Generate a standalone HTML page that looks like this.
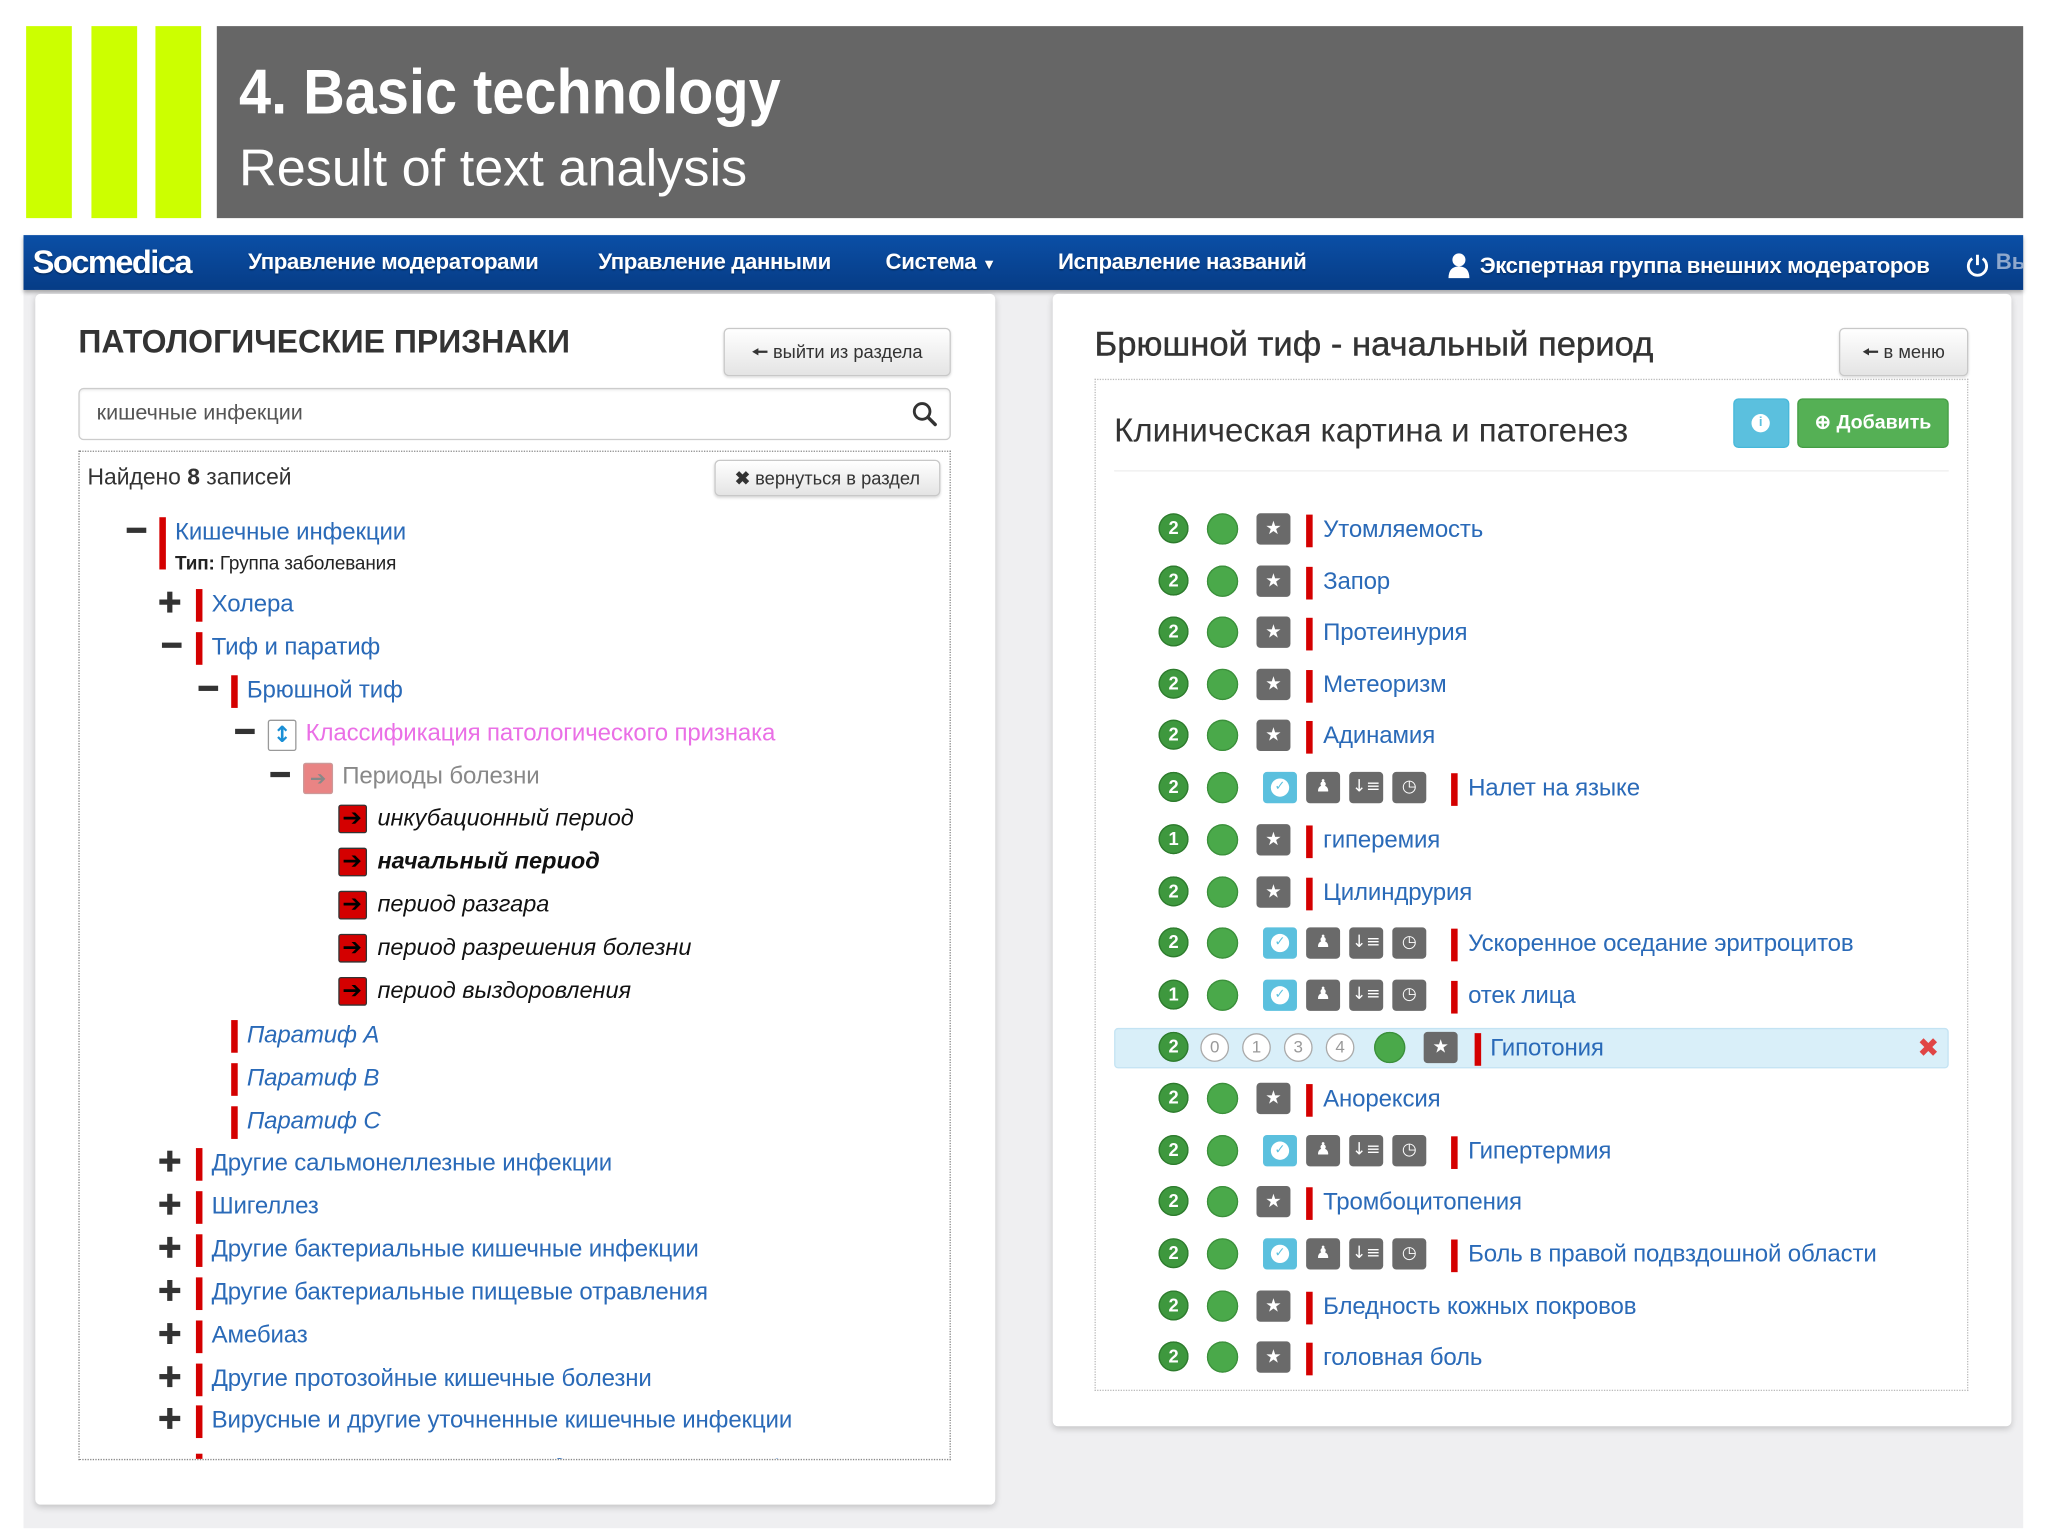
<!DOCTYPE html>
<html><head><meta charset="utf-8">
<style>
html,body{margin:0;padding:0;background:#fff;overflow:hidden;width:2048px;height:1536px}
#s{position:absolute;left:0;top:0;width:1568px;height:1176px;transform:scale(1.30612);transform-origin:0 0;font-family:"Liberation Sans",Arial,sans-serif;color:#333}
.a{position:absolute}
.g{background:#ccff00}
.btn{position:absolute;border:1px solid #c8c8c8;border-radius:4px;background:linear-gradient(#fff,#e4e4e4);box-shadow:0 1px 2px rgba(0,0,0,.15);font-size:14px;color:#333;text-align:center;box-sizing:border-box}
.nav{position:absolute;color:#fff;font-weight:bold;font-size:17px;letter-spacing:-0.3px;top:191px;white-space:nowrap;text-shadow:0 1px 1px rgba(0,0,0,.3)}
.r{position:absolute;left:0;height:0;white-space:nowrap}
.r>*{position:absolute}
.bar{width:5px;height:25px;top:-11px;background:#d40000}
.t{top:-12px;font-size:18.4px;line-height:23px;color:#2a6ab8;letter-spacing:-0.1px}
.mi{width:15px;height:4px;background:#333;top:-3px}
.pl{width:16px;height:16px;top:-9px}
.pl:before{content:"";position:absolute;left:0;top:6px;width:16px;height:4px;background:#333}
.pl:after{content:"";position:absolute;left:6px;top:0;width:4px;height:16px;background:#333}
.pi{width:22px;height:22px;top:-11px;background:#d40000;border:1px solid #333;border-radius:2px;box-sizing:border-box}
.pi:after{content:"\2794";position:absolute;left:2px;top:-1px;font-size:18px;color:#000;font-family:"DejaVu Sans",sans-serif}
.pt{top:-12px;font-size:18px;line-height:23px;font-style:italic;color:#111}
.num{width:23px;height:23px;top:-12px;border-radius:50%;background:#3e983e;box-shadow:inset 0 0 0 1px #2d7a2d;color:#fff;font-size:14px;font-weight:bold;text-align:center;line-height:23px}
.on{width:20px;height:20px;top:-11px;border-radius:50%;border:1px solid #aaa;color:#999;font-size:13px;text-align:center;line-height:20px;background:#fff}
.gc{width:24px;height:24px;top:-12px;border-radius:50%;background:#4aa94a;box-shadow:inset 0 0 0 1px #3b8f3b}
.sb{width:26px;height:24px;top:-12px;border-radius:3px;background:#6a6a6a;color:#fff;font-size:14px;text-align:center;line-height:24px;font-family:"DejaVu Sans",sans-serif}
.bb{width:26px;height:24px;top:-12px;border-radius:3px;background:#5bc0de}
.bb:after{content:"\2713";position:absolute;left:6px;top:5px;width:14px;height:14px;border-radius:50%;background:#fff;color:#5bc0de;font-size:10px;line-height:14px;text-align:center;font-weight:bold;font-family:"DejaVu Sans",sans-serif}
.gb{width:26px;height:24px;top:-12px;border-radius:3px;background:#6a6a6a;color:#fff;font-size:13px;text-align:center;line-height:24px;font-family:"DejaVu Sans",sans-serif}
</style></head><body>
<div id="s">
<div class="a g" style="left:20px;top:20px;width:35px;height:147px"></div>
<div class="a g" style="left:70px;top:20px;width:35px;height:147px"></div>
<div class="a g" style="left:119px;top:20px;width:35px;height:147px"></div>
<div class="a" style="left:166px;top:20px;width:1383px;height:147px;background:#666"></div>
<div class="a" style="left:183px;top:44px;color:#fff;font-size:48px;font-weight:bold;line-height:56px;transform:scaleX(.92);transform-origin:0 0;white-space:nowrap">4. Basic technology</div>
<div class="a" style="left:183px;top:105px;color:#fff;font-size:40px;line-height:48px;white-space:nowrap">Result of text analysis</div>

<div class="a" style="left:18px;top:222px;width:1531px;height:948px;background:#efeff1"></div>
<div class="a" style="left:18px;top:180px;width:1531px;height:42px;background:linear-gradient(#0b4fa6,#063c86);box-shadow:0 2px 3px rgba(0,0,0,.3);overflow:hidden">
 <div class="a" style="left:1510px;top:11px;color:#8fa8cc;font-size:17px;font-weight:bold">Вы</div>
</div>
<div class="nav" style="left:25px;top:187px;font-size:25px;letter-spacing:-1.2px">Socmedica</div>
<div class="nav" style="left:190px">Управление модераторами</div>
<div class="nav" style="left:458px">Управление данными</div>
<div class="nav" style="left:678px">Система <span style="font-size:11px">&#9660;</span></div>
<div class="nav" style="left:810px">Исправление названий</div>
<svg class="a" style="left:1108px;top:193px" width="18" height="20" viewBox="0 0 18 20"><circle cx="9" cy="6" r="5" fill="#fff"/><path d="M1 20 Q1 11 9 11 Q17 11 17 20Z" fill="#fff"/></svg>
<div class="nav" style="left:1133px;top:194px">Экспертная группа внешних модераторов</div>
<svg class="a" style="left:1505px;top:194px" width="18" height="18" viewBox="0 0 18 18"><path d="M5 4 A7 7 0 1 0 13 4" fill="none" stroke="#fff" stroke-width="2.2"/><path d="M9 1 V9" stroke="#fff" stroke-width="2.2"/></svg>

<div class="a" style="left:27px;top:225px;width:735px;height:927px;background:#fff;border-radius:4px;box-shadow:0 2px 5px rgba(0,0,0,.18)"></div>
<div class="a" style="left:60px;top:249px;font-size:24.5px;font-weight:bold;color:#333;white-space:nowrap">ПАТОЛОГИЧЕСКИЕ ПРИЗНАКИ</div>
<div class="btn" style="left:554px;top:251px;width:174px;height:37px;line-height:35px"><b style="font-family:'DejaVu Sans';font-size:14px">&#129044;</b> выйти из раздела</div>
<div class="a" style="left:60px;top:297px;width:668px;height:40px;border:1px solid #ccc;border-radius:4px;box-sizing:border-box;box-shadow:inset 0 1px 2px rgba(0,0,0,.08)"></div>
<div class="a" style="left:74px;top:307px;font-size:16.5px;color:#555">кишечные инфекции</div>
<svg class="a" style="left:698px;top:307px" width="20" height="20" viewBox="0 0 20 20"><circle cx="8" cy="8" r="6" fill="none" stroke="#333" stroke-width="2.2"/><path d="M12.5 12.5 L18 18" stroke="#333" stroke-width="2.6" stroke-linecap="round"/></svg>
<div class="a" style="left:60px;top:345px;width:668px;height:773px;border:1px dotted #888;box-sizing:border-box"></div>
<div class="a" style="left:67px;top:355px;font-size:17.5px;color:#333">Найдено <b>8</b> записей</div>
<div class="btn" style="left:547px;top:352px;width:173px;height:28px;line-height:27px;font-size:14px"><b>&#10006;</b> вернуться в раздел</div>

<div class="a" style="left:61px;top:346px;width:666px;height:771px;overflow:hidden">
<div class="a" style="left:-61px;top:-346px;width:800px;height:1200px">
 <div class="r" style="top:407px"><div class="mi" style="left:97px"></div><div class="bar" style="left:122px;height:40px"></div><div class="t" style="left:134px">Кишечные инфекции</div><div class="t" style="left:134px;top:14px;font-size:14.5px;color:#222"><b>Тип:</b> Группа заболевания</div></div>
 <div class="r" style="top:462px"><div class="pl" style="left:122px"></div><div class="bar" style="left:150px"></div><div class="t" style="left:162px">Холера</div></div>
 <div class="r" style="top:495px"><div class="mi" style="left:124px"></div><div class="bar" style="left:150px"></div><div class="t" style="left:162px">Тиф и паратиф</div></div>
 <div class="r" style="top:528px"><div class="mi" style="left:152px"></div><div class="bar" style="left:177px"></div><div class="t" style="left:189px">Брюшной тиф</div></div>
 <div class="r" style="top:561px"><div class="mi" style="left:180px"></div><div style="left:205px;top:-10px;width:22px;height:24px;border:1px solid #999;border-radius:2px;box-sizing:border-box;color:#1a8fd6;font-size:17px;text-align:center;line-height:22px;font-weight:bold;font-family:'DejaVu Sans'">&#8597;</div><div class="t" style="left:234px;color:#ea6fe6">Классификация патологического признака</div></div>
 <div class="r" style="top:594px"><div class="mi" style="left:207px"></div><div style="left:232px;top:-10px;width:23px;height:24px;border:1px solid #c99;border-radius:2px;box-sizing:border-box;background:#e98484;color:#888;font-size:15px;text-align:center;line-height:22px;font-family:'DejaVu Sans'">&#10132;</div><div class="t" style="left:262px;color:#888">Периоды болезни</div></div>
 <div class="r" style="top:627px"><div class="pi" style="left:259px"></div><div class="pt" style="left:289px">инкубационный период</div></div>
 <div class="r" style="top:660px"><div class="pi" style="left:259px"></div><div class="pt" style="left:289px;font-weight:bold">начальный период</div></div>
 <div class="r" style="top:693px"><div class="pi" style="left:259px"></div><div class="pt" style="left:289px">период разгара</div></div>
 <div class="r" style="top:726px"><div class="pi" style="left:259px"></div><div class="pt" style="left:289px">период разрешения болезни</div></div>
 <div class="r" style="top:759px"><div class="pi" style="left:259px"></div><div class="pt" style="left:289px">период выздоровления</div></div>
 <div class="r" style="top:792px"><div class="bar" style="left:177px"></div><div class="t" style="left:189px;font-style:italic">Паратиф A</div></div>
 <div class="r" style="top:825px"><div class="bar" style="left:177px"></div><div class="t" style="left:189px;font-style:italic">Паратиф B</div></div>
 <div class="r" style="top:858px"><div class="bar" style="left:177px"></div><div class="t" style="left:189px;font-style:italic">Паратиф C</div></div>
 <div class="r" style="top:890px"><div class="pl" style="left:122px"></div><div class="bar" style="left:150px"></div><div class="t" style="left:162px">Другие сальмонеллезные инфекции</div></div>
 <div class="r" style="top:923px"><div class="pl" style="left:122px"></div><div class="bar" style="left:150px"></div><div class="t" style="left:162px">Шигеллез</div></div>
 <div class="r" style="top:956px"><div class="pl" style="left:122px"></div><div class="bar" style="left:150px"></div><div class="t" style="left:162px">Другие бактериальные кишечные инфекции</div></div>
 <div class="r" style="top:989px"><div class="pl" style="left:122px"></div><div class="bar" style="left:150px"></div><div class="t" style="left:162px">Другие бактериальные пищевые отравления</div></div>
 <div class="r" style="top:1022px"><div class="pl" style="left:122px"></div><div class="bar" style="left:150px"></div><div class="t" style="left:162px">Амебиаз</div></div>
 <div class="r" style="top:1055px"><div class="pl" style="left:122px"></div><div class="bar" style="left:150px"></div><div class="t" style="left:162px">Другие протозойные кишечные болезни</div></div>
 <div class="r" style="top:1087px"><div class="pl" style="left:122px"></div><div class="bar" style="left:150px"></div><div class="t" style="left:162px">Вирусные и другие уточненные кишечные инфекции</div></div>
 <div class="r" style="top:1124px"><div class="bar" style="left:150px"></div><div class="t" style="left:162px;font-style:italic">Диарея и гастроэнтерит предположительно инфекционного</div></div>
</div></div>

<div class="a" style="left:806px;top:225px;width:734px;height:867px;background:#fff;border-radius:4px;box-shadow:0 2px 5px rgba(0,0,0,.18)"></div>
<div class="a" style="left:838px;top:248px;font-size:26.5px;color:#333;white-space:nowrap;-webkit-text-stroke:0.3px #333">Брюшной тиф - начальный период</div>
<div class="btn" style="left:1408px;top:251px;width:99px;height:37px;line-height:35px"><b style="font-family:'DejaVu Sans'">&#129044;</b> в меню</div>
<div class="a" style="left:838px;top:290px;width:669px;height:775px;border:1px dotted #bbb;box-sizing:border-box"></div>
<div class="a" style="left:853px;top:316px;font-size:25.3px;color:#333;white-space:nowrap">Клиническая картина и патогенез</div>
<div class="a" style="left:1327px;top:305px;width:43px;height:38px;background:#5bc0de;border-radius:4px;border:1px solid #46b8da;box-sizing:border-box"><div class="a" style="left:13px;top:11px;width:14px;height:14px;border-radius:50%;background:#fff;color:#5bc0de;font-size:10px;font-weight:bold;text-align:center;line-height:14px">i</div></div>
<div class="a" style="left:1376px;top:305px;width:116px;height:38px;background:#55b055;border-radius:4px;border:1px solid #449d44;box-sizing:border-box;color:#fff;font-size:15px;font-weight:bold;line-height:36px;text-align:center;white-space:nowrap">&#8853; Добавить</div>
<div class="a" style="left:853px;top:360px;width:639px;height:1px;background:#eee"></div>

<div class="a" style="left:853px;top:787px;width:639px;height:31px;background:#d9eff9;border:1px solid #c3e3f3;border-radius:3px;box-sizing:border-box"></div>

<div class="r" style="top:405px"><div class="num" style="left:887px">2</div><div class="gc" style="left:924px"></div><div class="sb" style="left:962px">&#9733;</div><div class="bar" style="left:1000px"></div><div class="t" style="left:1013px">Утомляемость</div></div>
<div class="r" style="top:445px"><div class="num" style="left:887px">2</div><div class="gc" style="left:924px"></div><div class="sb" style="left:962px">&#9733;</div><div class="bar" style="left:1000px"></div><div class="t" style="left:1013px">Запор</div></div>
<div class="r" style="top:484px"><div class="num" style="left:887px">2</div><div class="gc" style="left:924px"></div><div class="sb" style="left:962px">&#9733;</div><div class="bar" style="left:1000px"></div><div class="t" style="left:1013px">Протеинурия</div></div>
<div class="r" style="top:524px"><div class="num" style="left:887px">2</div><div class="gc" style="left:924px"></div><div class="sb" style="left:962px">&#9733;</div><div class="bar" style="left:1000px"></div><div class="t" style="left:1013px">Метеоризм</div></div>
<div class="r" style="top:563px"><div class="num" style="left:887px">2</div><div class="gc" style="left:924px"></div><div class="sb" style="left:962px">&#9733;</div><div class="bar" style="left:1000px"></div><div class="t" style="left:1013px">Адинамия</div></div>
<div class="r" style="top:603px"><div class="num" style="left:887px">2</div><div class="gc" style="left:924px"></div><div class="bb" style="left:967px"></div><div class="gb" style="left:1000px">&#9823;</div><div class="gb" style="left:1033px">&#8595;&#8801;</div><div class="gb" style="left:1066px">&#9719;</div><div class="bar" style="left:1111px"></div><div class="t" style="left:1124px">Налет на языке</div></div>
<div class="r" style="top:643px"><div class="num" style="left:887px">1</div><div class="gc" style="left:924px"></div><div class="sb" style="left:962px">&#9733;</div><div class="bar" style="left:1000px"></div><div class="t" style="left:1013px">гиперемия</div></div>
<div class="r" style="top:683px"><div class="num" style="left:887px">2</div><div class="gc" style="left:924px"></div><div class="sb" style="left:962px">&#9733;</div><div class="bar" style="left:1000px"></div><div class="t" style="left:1013px">Цилиндрурия</div></div>
<div class="r" style="top:722px"><div class="num" style="left:887px">2</div><div class="gc" style="left:924px"></div><div class="bb" style="left:967px"></div><div class="gb" style="left:1000px">&#9823;</div><div class="gb" style="left:1033px">&#8595;&#8801;</div><div class="gb" style="left:1066px">&#9719;</div><div class="bar" style="left:1111px"></div><div class="t" style="left:1124px">Ускоренное оседание эритроцитов</div></div>
<div class="r" style="top:762px"><div class="num" style="left:887px">1</div><div class="gc" style="left:924px"></div><div class="bb" style="left:967px"></div><div class="gb" style="left:1000px">&#9823;</div><div class="gb" style="left:1033px">&#8595;&#8801;</div><div class="gb" style="left:1066px">&#9719;</div><div class="bar" style="left:1111px"></div><div class="t" style="left:1124px">отек лица</div></div>
<div class="r" style="top:802px"><div class="num" style="left:887px">2</div><div class="on" style="left:919px">0</div><div class="on" style="left:951px">1</div><div class="on" style="left:983px">3</div><div class="on" style="left:1015px">4</div><div class="gc" style="left:1052px"></div><div class="sb" style="left:1090px">&#9733;</div><div class="bar" style="left:1129px"></div><div class="t" style="left:1141px">Гипотония</div><div style="left:1468px;top:-12px;color:#e04545;font-size:20px;font-weight:bold;font-family:'DejaVu Sans'">&#10006;</div></div>
<div class="r" style="top:841px"><div class="num" style="left:887px">2</div><div class="gc" style="left:924px"></div><div class="sb" style="left:962px">&#9733;</div><div class="bar" style="left:1000px"></div><div class="t" style="left:1013px">Анорексия</div></div>
<div class="r" style="top:881px"><div class="num" style="left:887px">2</div><div class="gc" style="left:924px"></div><div class="bb" style="left:967px"></div><div class="gb" style="left:1000px">&#9823;</div><div class="gb" style="left:1033px">&#8595;&#8801;</div><div class="gb" style="left:1066px">&#9719;</div><div class="bar" style="left:1111px"></div><div class="t" style="left:1124px">Гипертермия</div></div>
<div class="r" style="top:920px"><div class="num" style="left:887px">2</div><div class="gc" style="left:924px"></div><div class="sb" style="left:962px">&#9733;</div><div class="bar" style="left:1000px"></div><div class="t" style="left:1013px">Тромбоцитопения</div></div>
<div class="r" style="top:960px"><div class="num" style="left:887px">2</div><div class="gc" style="left:924px"></div><div class="bb" style="left:967px"></div><div class="gb" style="left:1000px">&#9823;</div><div class="gb" style="left:1033px">&#8595;&#8801;</div><div class="gb" style="left:1066px">&#9719;</div><div class="bar" style="left:1111px"></div><div class="t" style="left:1124px">Боль в правой подвздошной области</div></div>
<div class="r" style="top:1000px"><div class="num" style="left:887px">2</div><div class="gc" style="left:924px"></div><div class="sb" style="left:962px">&#9733;</div><div class="bar" style="left:1000px"></div><div class="t" style="left:1013px">Бледность кожных покровов</div></div>
<div class="r" style="top:1039px"><div class="num" style="left:887px">2</div><div class="gc" style="left:924px"></div><div class="sb" style="left:962px">&#9733;</div><div class="bar" style="left:1000px"></div><div class="t" style="left:1013px">головная боль</div></div>
</div>
</body></html>
